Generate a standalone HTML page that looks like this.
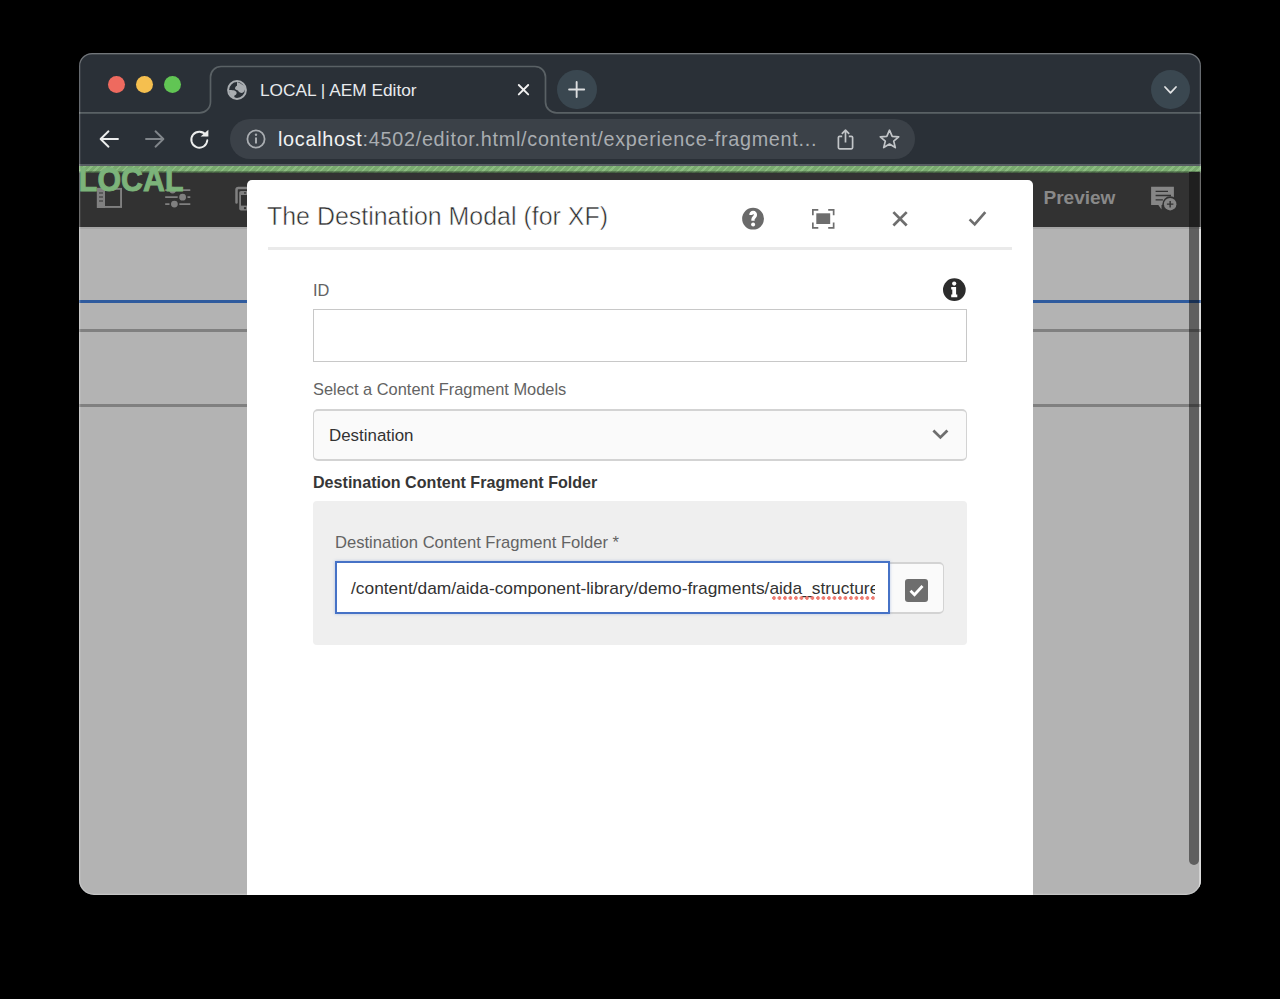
<!DOCTYPE html>
<html><head><meta charset="utf-8">
<style>
*{margin:0;padding:0;box-sizing:border-box}
html,body{width:1280px;height:999px;background:#000;overflow:hidden;font-family:"Liberation Sans",sans-serif}
.a{position:absolute}
#win{position:absolute;left:79px;top:53px;width:1122px;height:842px;border-radius:13px 13px 15px 15px;overflow:hidden;background:#2a3037}
#pg{position:absolute;left:-79px;top:-53px;width:1280px;height:999px}
#winborder{position:absolute;left:79px;top:53px;width:1122px;height:842px;border-radius:13px 13px 15px 15px;box-shadow:inset 0 1px 0 0.5px rgba(255,255,255,0.13),inset 0 0 0 1.3px rgba(255,255,255,0.24);pointer-events:none;z-index:50}
.dot{position:absolute;width:17.5px;height:17.5px;border-radius:50%;top:75.5px}
.nowrap{white-space:nowrap}
.lbl{position:absolute;font-size:16.4px;color:#636363;white-space:nowrap;line-height:1}
</style></head>
<body>
<div id="win"><div id="pg">
  <!-- ===== tab strip ===== -->
  <div class="dot" style="left:107.5px;background:#ee6a5f"></div>
  <div class="dot" style="left:135.5px;background:#f5bf4f"></div>
  <div class="dot" style="left:163.5px;background:#61c554"></div>
  <svg class="a" style="left:0;top:0" width="1280" height="120">
    <path d="M79 112.9 H199 A11 11 0 0 0 210.5 101.9 V77 A10.5 10.5 0 0 1 221 66.5 H535 A10.5 10.5 0 0 1 545.5 77 V101.9 A11 11 0 0 0 556.5 112.9 H1201" fill="none" stroke="#5a6165" stroke-width="1.7"/>
  </svg>
  <!-- globe -->
  <svg class="a" style="left:227px;top:80px" width="20" height="20" viewBox="0 0 20 20">
    <circle cx="10" cy="10" r="8.9" fill="none" stroke="#a9adb1" stroke-width="2"/>
    <path d="M10 2 C 12 3, 15 3.5, 18 7 C 18.5 10, 17 12.5, 15 13 C 13 13, 11.5 11.8, 11 10.5 C 10 10, 8 9.8, 8 8.5 C 8 7.3, 9 6, 10 5.8 Z" fill="#a9adb1"/>
    <path d="M2 10 C 5 10, 8.5 10.3, 9.5 12 C 10 14, 9 15, 7.5 15.5 C 7 16.5, 7.5 17.5, 8 18.5 C 4 17, 2 14, 2 10 Z" fill="#a9adb1"/>
  </svg>
  <div class="a nowrap" style="left:260px;top:79.5px;font-size:17.3px;color:#e8eaed;line-height:20px">LOCAL | AEM Editor</div>
  <!-- tab close -->
  <svg class="a" style="left:516px;top:82px" width="15" height="15" viewBox="0 0 15 15">
    <path d="M2.8 3.0 L12.2 12.4 M12.2 3.0 L2.8 12.4" stroke="#f1f1f1" stroke-width="1.9" stroke-linecap="round"/>
  </svg>
  <!-- new tab -->
  <div class="a" style="left:557px;top:69.5px;width:39.5px;height:39.5px;border-radius:50%;background:#3a4750"></div>
  <svg class="a" style="left:566px;top:79px" width="21" height="21" viewBox="0 0 21 21">
    <path d="M10.65 3.0 V18.1 M3.1 10.55 H18.2" stroke="#dcdedf" stroke-width="1.9" stroke-linecap="round"/>
  </svg>
  <!-- tab search dropdown -->
  <div class="a" style="left:1151px;top:70px;width:39px;height:39px;border-radius:50%;background:#3a4750"></div>
  <svg class="a" style="left:1162px;top:82px" width="17" height="14" viewBox="0 0 17 14">
    <path d="M3.0 5.0 L8.5 10.8 L14.0 5.0" fill="none" stroke="#e2e3e4" stroke-width="1.8" stroke-linecap="round" stroke-linejoin="round"/>
  </svg>

  <!-- ===== toolbar ===== -->
  <!-- back -->
  <svg class="a" style="left:98px;top:127.5px" width="22" height="22" viewBox="0 0 22 22">
    <path d="M20 11 H3 M10.5 3.3 L2.6 11 L10.5 18.7" fill="none" stroke="#eceded" stroke-width="1.9" stroke-linecap="round" stroke-linejoin="round"/>
  </svg>
  <!-- forward -->
  <svg class="a" style="left:144px;top:128px" width="22" height="22" viewBox="0 0 22 22">
    <path d="M2 11 H19 M11.5 3.3 L19.4 11 L11.5 18.7" fill="none" stroke="#80858a" stroke-width="1.9" stroke-linecap="round" stroke-linejoin="round"/>
  </svg>
  <!-- reload -->
  <svg class="a" style="left:188px;top:128px" width="23" height="23" viewBox="0 0 23 23">
    <path d="M18.0 7.3 A8.0 8.0 0 1 0 19.3 12.2" fill="none" stroke="#eceded" stroke-width="1.9" stroke-linecap="round"/>
    <path d="M12.6 8.6 H20.4 V1.8 Z" fill="#eceded"/>
  </svg>
  <!-- omnibox -->
  <div class="a" style="left:230px;top:119px;width:685px;height:39.5px;border-radius:20px;background:#3b4148"></div>
  <svg class="a" style="left:245px;top:128px" width="22" height="22" viewBox="0 0 22 22">
    <circle cx="11" cy="11" r="8.6" fill="none" stroke="#a9adb1" stroke-width="1.8"/>
    <path d="M11 9.6 V15.6" stroke="#a9adb1" stroke-width="2"/>
    <circle cx="11" cy="6.8" r="1.2" fill="#a9adb1"/>
  </svg>
  <div class="a nowrap" style="left:278px;top:128px;font-size:19.8px;letter-spacing:0.72px;line-height:22px;color:#a9adb1"><span style="color:#f1f2f3">localhost</span>:4502/editor.html/content/experience-fragment...</div>
  <!-- share -->
  <svg class="a" style="left:836px;top:128px" width="20" height="22" viewBox="0 0 20 22">
    <path d="M6.2 8.3 H3.6 A1.2 1.2 0 0 0 2.4 9.5 V19.6 A1.2 1.2 0 0 0 3.6 20.8 H15.4 A1.2 1.2 0 0 0 16.6 19.6 V9.5 A1.2 1.2 0 0 0 15.4 8.3 H12.8" fill="none" stroke="#c2c5c8" stroke-width="1.7"/>
    <path d="M9.5 14.5 V2.4 M5.8 5.9 L9.5 2.2 L13.2 5.9" fill="none" stroke="#c2c5c8" stroke-width="1.7" stroke-linejoin="round"/>
  </svg>
  <!-- star -->
  <svg class="a" style="left:878px;top:128px" width="23" height="22" viewBox="0 0 23 22">
    <path d="M11.5 2.2 L14.2 8.3 L20.7 8.8 L15.7 13.1 L17.3 19.6 L11.5 16.1 L5.7 19.6 L7.3 13.1 L2.3 8.8 L8.8 8.3 Z" fill="none" stroke="#c2c5c8" stroke-width="1.7" stroke-linejoin="round"/>
  </svg>
  <!-- toolbar bottom border -->
  <div class="a" style="left:79px;top:164px;width:1122px;height:2px;background:#565d62"></div>

  <!-- ===== AEM editor ===== -->
  <div class="a" style="left:79px;top:166px;width:1122px;height:61px;background:#323232"></div>
  <div class="a" style="left:79px;top:166px;width:1122px;height:7px;background:linear-gradient(180deg,rgba(0,0,0,0) 0 5px,rgba(30,40,30,0.35) 5px 6px,rgba(30,40,30,0.6) 6px 7px),repeating-linear-gradient(135deg,#79aa6f 0 3.3px,#8cbc81 3.3px 5.0px)"></div>
  <div class="a" style="left:79px;top:227px;width:1122px;height:668px;background:#b3b3b3"></div>
  <div class="a" style="left:1198.5px;top:227px;width:2px;height:668px;background:#cfcfcf"></div>
  <div class="a" style="left:79px;top:227px;width:1122px;height:2px;background:#a6a6a6"></div>
  <div class="a" style="left:79px;top:300px;width:1122px;height:2.5px;background:#2f5b9e"></div>
  <div class="a" style="left:79px;top:329px;width:1122px;height:2.5px;background:#808080"></div>
  <div class="a" style="left:79px;top:404px;width:1122px;height:2.5px;background:#808080"></div>
  <!-- scrollbar -->
  <div class="a" style="left:1189px;top:172px;width:11px;height:55px;background:#1f1f1f"></div>
  <div class="a" style="left:1189px;top:227px;width:9.5px;height:638px;border-radius:0 0 5px 5px;background:rgba(0,0,0,0.47)"></div>

  <!-- AEM toolbar icons -->
  <svg class="a" style="left:96px;top:187px" width="27" height="22" viewBox="0 0 27 22">
    <rect x="1.85" y="1.85" width="23.2" height="18.1" fill="none" stroke="#808080" stroke-width="1.9"/>
    <rect x="0.9" y="0.9" width="8.1" height="20" fill="#808080"/>
    <path d="M3 6 H7 M3 10 H7 M3 14 H7" stroke="#323232" stroke-width="1.2"/>
  </svg>
  <svg class="a" style="left:164px;top:186px" width="28" height="24" viewBox="0 0 28 24">
    <path d="M1.2 4.1 H26.3 M1.2 11.2 H26.3 M1.2 18.05 H26.3" stroke="#808080" stroke-width="1.7"/>
    <circle cx="8.6" cy="4.1" r="4.2" fill="#808080" stroke="#323232" stroke-width="1.6"/>
    <circle cx="18.6" cy="11.2" r="4.2" fill="#808080" stroke="#323232" stroke-width="1.6"/>
    <circle cx="10.4" cy="18.05" r="4.2" fill="#808080" stroke="#323232" stroke-width="1.6"/>
  </svg>
  <svg class="a" style="left:234px;top:186px" width="16" height="26" viewBox="0 0 16 26">
    <path d="M2.5 16.5 V3.8 Q2.5 2 4.3 2 H16" fill="none" stroke="#808080" stroke-width="2.5" stroke-linecap="round"/>
    <rect x="5.2" y="5" width="14" height="19.6" rx="1.8" fill="#808080"/>
    <rect x="7" y="9" width="12" height="10.6" fill="#323232"/>
    <circle cx="11" cy="6.9" r="0.9" fill="#323232"/>
    <circle cx="11" cy="22.1" r="1.2" fill="#323232"/>
  </svg>
  <div class="a nowrap" style="left:1043.5px;top:187px;font-size:19px;font-weight:bold;color:#898989;line-height:22px">Preview</div>
  <svg class="a" style="left:1150px;top:186px" width="28" height="26" viewBox="0 0 28 26">
    <path d="M1.1 0.7 H23.9 V19 H11.5 V23.6 L8.3 19 H1.1 Z" fill="#868686"/>
    <path d="M5.6 5.4 H18 M5.6 9.5 H21 M5.6 13.9 H12.9" stroke="#323232" stroke-width="1.3"/>
    <circle cx="20.15" cy="18.15" r="7.8" fill="#323232"/>
    <circle cx="20.15" cy="18.15" r="6.25" fill="#868686"/>
    <path d="M20.15 14.9 V21.4 M16.9 18.15 H23.4" stroke="#323232" stroke-width="1.4"/>
  </svg>
  <div class="a nowrap" style="left:78.8px;top:164px;font-size:30.3px;font-weight:bold;color:#7cb37a;line-height:34px;letter-spacing:0.1px;transform:scaleY(1.07);transform-origin:0 27px;-webkit-text-stroke:0.9px #7cb37a">LOCAL</div>

  <!-- ===== modal ===== -->
  <div class="a" style="left:247px;top:180px;width:786px;height:720px;background:#fff;border-radius:5px 5px 0 0"></div>
  <div class="a nowrap" style="left:267px;top:200px;font-size:24.95px;color:#2e2e2e;-webkit-text-stroke:0.5px #fff;line-height:30px;transform:scaleY(1.06);transform-origin:0 6px">The Destination Modal (for XF)</div>
  <!-- help -->
  <svg class="a" style="left:741px;top:207px" width="24" height="24" viewBox="0 0 24 24">
    <circle cx="12.05" cy="11.7" r="10.9" fill="#6a6a6a"/>
    <path d="M9.9 7.9 A2.25 2.6 0 1 1 14.4 7.9 C 14.4 10.0, 12.0 10.4, 12.0 12.3 V13.8" fill="none" stroke="#fff" stroke-width="3.3"/>
    <circle cx="12.1" cy="17.4" r="2.0" fill="#fff"/>
  </svg>
  <!-- fullscreen -->
  <svg class="a" style="left:811px;top:208px" width="25" height="22" viewBox="0 0 25 22">
    <path d="M1.85 7.3 V1.85 H7.3 M17.2 1.85 H22.65 V7.3 M22.65 14.4 V19.9 H17.2 M7.3 19.9 H1.85 V14.4" fill="none" stroke="#6e6e6e" stroke-width="1.7"/>
    <rect x="5.3" y="5.3" width="13.9" height="10.7" fill="#6e6e6e"/>
  </svg>
  <!-- close -->
  <svg class="a" style="left:890px;top:209px" width="20" height="20" viewBox="0 0 20 20">
    <path d="M3.4 3.1 L16.7 16.5 M16.7 3.1 L3.4 16.5" stroke="#6e6e6e" stroke-width="2.7"/>
  </svg>
  <!-- check -->
  <svg class="a" style="left:966px;top:209px" width="22" height="20" viewBox="0 0 22 20">
    <path d="M3.6 10.4 L8.7 15.4 L19.3 3.1" fill="none" stroke="#6e6e6e" stroke-width="2.7"/>
  </svg>
  <div class="a" style="left:268px;top:247px;width:744px;height:2.5px;background:#eaeaea"></div>

  <div class="lbl" style="left:313px;top:281.5px">ID</div>
  <svg class="a" style="left:942px;top:277px" width="25" height="25" viewBox="0 0 25 25">
    <circle cx="12.35" cy="12.7" r="11.35" fill="#2c2c2c"/>
    <circle cx="12.2" cy="6.6" r="2.1" fill="#fff"/>
    <path d="M9.2 10.1 H14.1 V17.4 H15.3 V20.2 H9.2 V17.4 H10.3 V12.6 H9.2 Z" fill="#fff"/>
  </svg>
  <div class="a" style="left:313px;top:309px;width:654px;height:53px;border:1px solid #c8c8c8;background:#fff"></div>

  <div class="lbl" style="left:313px;top:381px">Select a Content Fragment Models</div>
  <div class="a" style="left:313px;top:408.5px;width:654px;height:52.5px;border:1.5px solid #d3d3d3;border-top-width:2px;border-bottom-width:2px;border-radius:5px;background:#fafafa"></div>
  <div class="a nowrap" style="left:329px;top:428px;font-size:16.9px;color:#323232;line-height:1">Destination</div>
  <svg class="a" style="left:930px;top:426px" width="20" height="16" viewBox="0 0 20 16">
    <path d="M3.4 4.6 L10.4 11.4 L17.4 4.6" fill="none" stroke="#6e6e6e" stroke-width="2.8"/>
  </svg>

  <div class="a nowrap" style="left:313px;top:473.5px;font-size:16.1px;font-weight:bold;color:#363636;line-height:1">Destination Content Fragment Folder</div>
  <div class="a" style="left:313px;top:501px;width:654px;height:144px;border-radius:4px;background:#efefef"></div>
  <div class="lbl" style="left:335px;top:534.5px;font-size:16.6px">Destination Content Fragment Folder *</div>
  <div class="a" style="left:889px;top:561.5px;width:55px;height:52.5px;border:1px solid #d3d3d3;border-top-width:2px;border-bottom-width:2px;border-radius:0 5px 5px 0;background:#fafafa"></div>
  <svg class="a" style="left:904px;top:578px" width="25" height="25" viewBox="0 0 25 25">
    <rect x="1" y="1" width="23" height="23" rx="3" fill="#6e6e6e"/>
    <path d="M6.5 12.8 L10.5 16.8 L18.5 8" fill="none" stroke="#fff" stroke-width="2.8"/>
  </svg>
  <div class="a" style="left:335px;top:561px;width:555px;height:53px;border:2px solid #4672c6;background:#fff;box-shadow:0 0 3px rgba(70,114,198,0.35)">
    <div class="a" style="left:0;top:0;width:538px;height:49px;overflow:hidden">
    <div class="a nowrap" style="left:14px;top:17px;font-size:17.35px;color:#323232;line-height:1">/content/dam/aida-component-library/demo-fragments/aida_structure</div>
    <div class="a" style="left:435px;top:33px;width:110px;height:4px;background:radial-gradient(circle at 2px 2px,#ee7a70 0 1.55px,rgba(238,122,112,0) 2.05px) 0 0/5.5px 4px repeat-x"></div>
    </div>
  </div>
</div></div>
<div id="winborder"></div>
</body></html>
